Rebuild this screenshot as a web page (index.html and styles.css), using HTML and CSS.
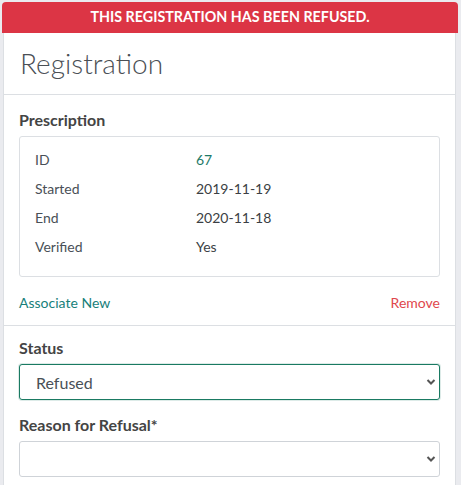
FILE: index.html
```html
<!DOCTYPE html>
<html lang="en">
<head>
<meta charset="utf-8">
<title>Registration</title>
<link rel="stylesheet" href="styles.css">
</head>
<body>
<div class="page">
  <div class="banner">This registration has been refused.</div>
  <div class="card">
    <div class="card-header">
      <h1 class="title">Registration</h1>
    </div>
    <div class="section">
      <h2 class="section-title">Prescription</h2>
      <div class="info-box">
        <div class="info-row"><span class="info-label">ID</span><span class="info-value link">67</span></div>
        <div class="info-row"><span class="info-label">Started</span><span class="info-value">2019-11-19</span></div>
        <div class="info-row"><span class="info-label">End</span><span class="info-value">2020-11-18</span></div>
        <div class="info-row"><span class="info-label">Verified</span><span class="info-value">Yes</span></div>
      </div>
      <div class="actions">
        <a class="action-associate">Associate New</a>
        <a class="action-remove">Remove</a>
      </div>
    </div>
    <div class="section section-form">
      <label class="field-label">Status</label>
      <div class="select-wrap">
        <select class="select select-focus"><option>Refused</option></select>
        <svg class="chevron" width="10" height="8" viewBox="0 0 10 8"><path d="M1.5 2 L5 5.5 L8.5 2" fill="none" stroke="#555" stroke-width="2"/></svg>
      </div>
      <label class="field-label field-label-2">Reason for Refusal*</label>
      <div class="select-wrap">
        <select class="select"><option></option></select>
        <svg class="chevron" width="10" height="8" viewBox="0 0 10 8"><path d="M1.5 2 L5 5.5 L8.5 2" fill="none" stroke="#555" stroke-width="2"/></svg>
      </div>
    </div>
  </div>
</div>
</body>
</html>
```

FILE: styles.css
```css
html, body {
  margin: 0;
  padding: 0;
  background: #eaebef;
  font-family: Lato, "Open Sans", sans-serif;
  color: #495057;
}

.page {
  padding: 2px 3px 0 2px;
}

.banner {
  background: #dc3545;
  color: #fff;
  font-weight: 700;
  font-size: 14.3px;
  text-transform: uppercase;
  text-align: center;
  height: 31px;
  line-height: 30px;
  border-radius: 4px 4px 0 0;
}

.card {
  background: #fff;
  margin: 0 2px 0 1px;
  border: 1px solid #dcdfe3;
  border-top: none;
}

.card-header {
  border-bottom: 1px solid #dcdfe3;
  padding: 12px 16px 13px;
  height: 36px;
}

.title {
  margin: 0;
  font-weight: 300;
  font-size: 28px;
  line-height: 36px;
  color: #4a4f55;
}

.section {
  padding: 14px 15px 0;
  border-bottom: 1px solid #dcdfe3;
}

.section-title {
  margin: 0 0 5px;
  font-size: 16px;
  font-weight: 700;
  line-height: 22px;
  color: #444;
}

.info-box {
  border: 1px solid #dcdfe3;
  border-radius: 3px;
  padding: 8px 15px 15px;
}

.info-row {
  display: flex;
  line-height: 29px;
  font-size: 14px;
}

.info-label {
  width: 161px;
  color: #495057;
}

.info-value {
  color: #3b3f44;
}

.info-value.link {
  color: #1e7a68;
}

.actions {
  display: flex;
  justify-content: space-between;
  font-size: 14px;
  line-height: 20px;
  padding: 16px 0 12px;
}

.action-associate {
  color: #17807a;
}

.action-remove {
  color: #e0474c;
}

.section-form {
  border-bottom: none;
  padding-top: 11px;
  padding-bottom: 10px;
}

.field-label {
  display: block;
  font-size: 16px;
  font-weight: 700;
  line-height: 22px;
  color: #444;
  margin-bottom: 5px;
}

.field-label-2 {
  margin-top: 14px;
}

.select-wrap {
  position: relative;
}

.select {
  display: block;
  width: 100%;
  height: 36px;
  -webkit-appearance: none;
  appearance: none;
  border: 1px solid #cfd3d8;
  border-radius: 3px;
  background: #fff;
  font-family: Lato, "Open Sans", sans-serif;
  font-size: 16px;
  color: #495057;
  padding: 0 16px;
  outline: none;
}

.select-focus {
  border-color: #1a7a62;
  box-shadow: 0 0 0 1px rgba(26, 122, 98, 0.15);
}

.chevron {
  position: absolute;
  right: 4px;
  top: 14px;
}
```
